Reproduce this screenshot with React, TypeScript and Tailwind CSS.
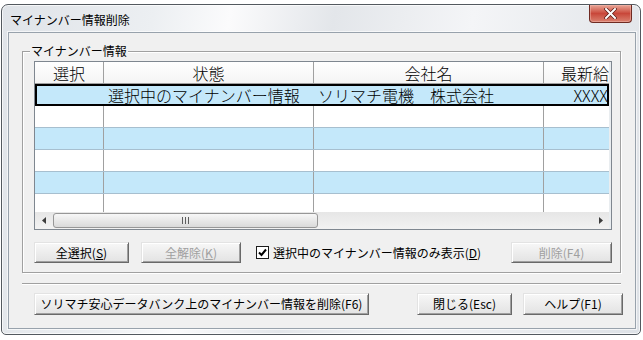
import React from "react";

// Win7 basic style dialog: マイナンバー情報削除

const rows = [
  { selected: true, status: "選択中のマイナンバー情報", company: "ソリマチ電機　株式会社", salary: "XXXX" },
  { selected: false, blue: false },
  { selected: false, blue: true },
  { selected: false, blue: false },
  { selected: false, blue: true },
  { selected: false, blue: false },
];

function WinButton({ width, height = "h-[21px]", disabled = false, children, className = "" }) {
  return (
    <div
      className={`${width} ${height} ${className} flex items-center justify-center text-[12px] leading-none border-t border-l border-[#e3e3e3] border-r border-b border-r-[#696969] border-b-[#696969] bg-gradient-to-b from-[#f7f7f7] to-[#e3e3e3] shadow-[inset_1px_1px_0_#ffffff,inset_-1px_-1px_0_#a0a0a0] ${
        disabled ? "text-[#a0a0a0]" : "text-black"
      }`}
    >
      {children}
    </div>
  );
}

function ArrowLeft() {
  return (
    <svg width="4" height="7" viewBox="0 0 4 7">
      <polygon points="4,0 4,7 0,3.5" fill="#3c3c3c" />
    </svg>
  );
}

function ArrowRight() {
  return (
    <svg width="4" height="7" viewBox="0 0 4 7">
      <polygon points="0,0 0,7 4,3.5" fill="#3c3c3c" />
    </svg>
  );
}

export default function App() {
  return (
    <div className="w-[643px] h-[340px] bg-white font-['Noto_Sans_CJK_JP',sans-serif] text-black overflow-hidden">
      {/* window frame */}
      <div className="ml-[1px] mt-[4px] w-[640px] h-[331px] flex flex-col rounded-t-[7px] rounded-b-[5px] border border-[#53595f] shadow-[inset_0_0_0_1px_#ffffffb0] bg-[linear-gradient(100deg,#dfe3e8_0%,#eceff2_22%,#fbfbfc_33%,#e3e6ea_48%,#f4f5f7_68%,#dde1e6_100%)]">
        {/* title bar */}
        <div className="h-[27px] flex items-start">
          <span className="ml-[8px] mt-[7px] text-[12px] leading-[15px]">マイナンバー情報削除</span>
          <div className="ml-auto mr-[8px] w-[43px] h-[18px] flex items-center justify-center rounded-b-[4px] border border-t-0 border-[#6e2a22] bg-gradient-to-b from-[#e8a597] via-[#c8473a] to-[#d9806f] shadow-[inset_0_0_0_1px_#f2b9ad80]">
            <svg width="13" height="11" viewBox="0 0 13 11">
              <path d="M2 1 L11 10 M11 1 L2 10" stroke="#5a1a14" strokeWidth="3.4" strokeLinecap="square" />
              <path d="M2 1 L11 10 M11 1 L2 10" stroke="#ffffff" strokeWidth="2" strokeLinecap="square" />
            </svg>
          </div>
        </div>

        {/* client area */}
        <div className="ml-[6px] mr-[4px] mb-[5px] flex-1 border border-[#98a2ac] shadow-[0_0_0_1px_#ffffffa0] bg-[#f0f0f0] flex flex-col">
          {/* group box */}
          <div className="relative ml-[13px] mt-[18px] w-[599px] border border-[#a0a0a0] shadow-[1px_1px_0_#ffffff,inset_1px_1px_0_#ffffff] pt-[9px] pl-[11px] pr-[8px] pb-[9px]">
            <span className="absolute left-[7px] top-[-9px] px-[1px] bg-[#f0f0f0] text-[12px] leading-[16px]">
              マイナンバー情報
            </span>

            {/* grid */}
            <div className="w-[578px] h-[169px] border border-[#7f8790] bg-[#e9edf0] flex flex-col overflow-hidden font-light">
              {/* header */}
              <div className="w-[574px] h-[22px] flex shrink-0 border-b border-[#a0a0a0] bg-gradient-to-b from-[#ffffff] to-[#f4f4f4] text-[16px] leading-none">
                <div className="w-[69px] border-r border-[#a0a0a0] flex items-center justify-center">選択</div>
                <div className="w-[210px] border-r border-[#a0a0a0] flex items-center justify-center">状態</div>
                <div className="w-[230px] border-r border-[#a0a0a0] flex items-center justify-center">会社名</div>
                <div className="flex-1 flex items-center justify-end overflow-hidden whitespace-nowrap">最新給</div>
              </div>

              {/* rows */}
              <div className="flex-1 overflow-hidden">
                {rows.map((r, i) =>
                  r.selected ? (
                    <div
                      key={i}
                      className="w-[574px] h-[22px] flex bg-[#c4e8fa] shadow-[inset_0_0_0_2px_#000000] text-[16px] leading-none"
                    >
                      <div className="w-[69px]" />
                      <div className="w-[210px] flex items-center pl-[4px] whitespace-nowrap">{r.status}</div>
                      <div className="w-[230px] flex items-center pl-[4px] whitespace-nowrap">{r.company}</div>
                      <div className="flex-1 flex items-center justify-end pr-[1px]">{r.salary}</div>
                    </div>
                  ) : (
                    <div
                      key={i}
                      className={`w-[574px] h-[22px] flex border-b border-[#a7bfcf] ${r.blue ? "bg-[#c4e8fa]" : "bg-white"}`}
                    >
                      <div className="w-[69px] border-r border-[#a0a0a0]" />
                      <div className="w-[210px] border-r border-[#a0a0a0]" />
                      <div className="w-[230px] border-r border-[#a0a0a0]" />
                      <div className="flex-1" />
                    </div>
                  )
                )}
              </div>

              {/* horizontal scrollbar */}
              <div className="w-[574px] h-[17px] shrink-0 flex items-center bg-gradient-to-b from-[#e6e6e6] to-[#f2f2f2]">
                <div className="w-[17px] h-[17px] flex items-center justify-center">
                  <ArrowLeft />
                </div>
                <div className="ml-[1px] w-[265px] h-[15px] rounded-[3px] border border-[#979797] bg-gradient-to-b from-[#f7f7f7] to-[#dadada] flex items-center justify-center gap-[2px]">
                  <div className="w-[1px] h-[7px] bg-[#5e5e5e]" />
                  <div className="w-[1px] h-[7px] bg-[#5e5e5e]" />
                  <div className="w-[1px] h-[7px] bg-[#5e5e5e]" />
                </div>
                <div className="ml-auto w-[17px] h-[17px] flex items-center justify-center">
                  <ArrowRight />
                </div>
              </div>
            </div>

            {/* buttons row */}
            <div className="mt-[12px] h-[21px] flex items-center">
              <WinButton width="w-[95px]">
                全選択(<span className="underline">S</span>)
              </WinButton>
              <WinButton width="w-[100px]" disabled className="ml-[12px]">
                全解除(<span className="underline">K</span>)
              </WinButton>
              <div className="ml-[15px] w-[13px] h-[13px] border border-[#1c1c1c] bg-white flex items-center justify-center">
                <svg width="9" height="9" viewBox="0 0 9 9">
                  <path d="M1 4.5 L3.5 7 L8 1.5" stroke="#000000" strokeWidth="2" fill="none" />
                </svg>
              </div>
              <span className="ml-[4px] text-[12px] leading-none whitespace-nowrap">
                選択中のマイナンバー情報のみ表示(<span className="underline">D</span>)
              </span>
              <WinButton width="w-[101px]" disabled className="ml-auto">
                削除(F4)
              </WinButton>
            </div>
          </div>

          {/* separator */}
          <div className="ml-[13px] mt-[10px] w-[599px] border-t border-[#a0a0a0] border-b border-b-white" />

          {/* bottom buttons */}
          <div className="mt-[8px] ml-[25px] flex items-center">
            <WinButton width="w-[335px]" height="h-[22px]">
              ソリマチ安心データバンク上のマイナンバー情報を削除(F6)
            </WinButton>
            <WinButton width="w-[95px]" height="h-[22px]" className="ml-[48px]">
              閉じる(Esc)
            </WinButton>
            <WinButton width="w-[100px]" height="h-[22px]" className="ml-[11px]">
              ヘルプ(F1)
            </WinButton>
          </div>
        </div>
      </div>
    </div>
  );
}
